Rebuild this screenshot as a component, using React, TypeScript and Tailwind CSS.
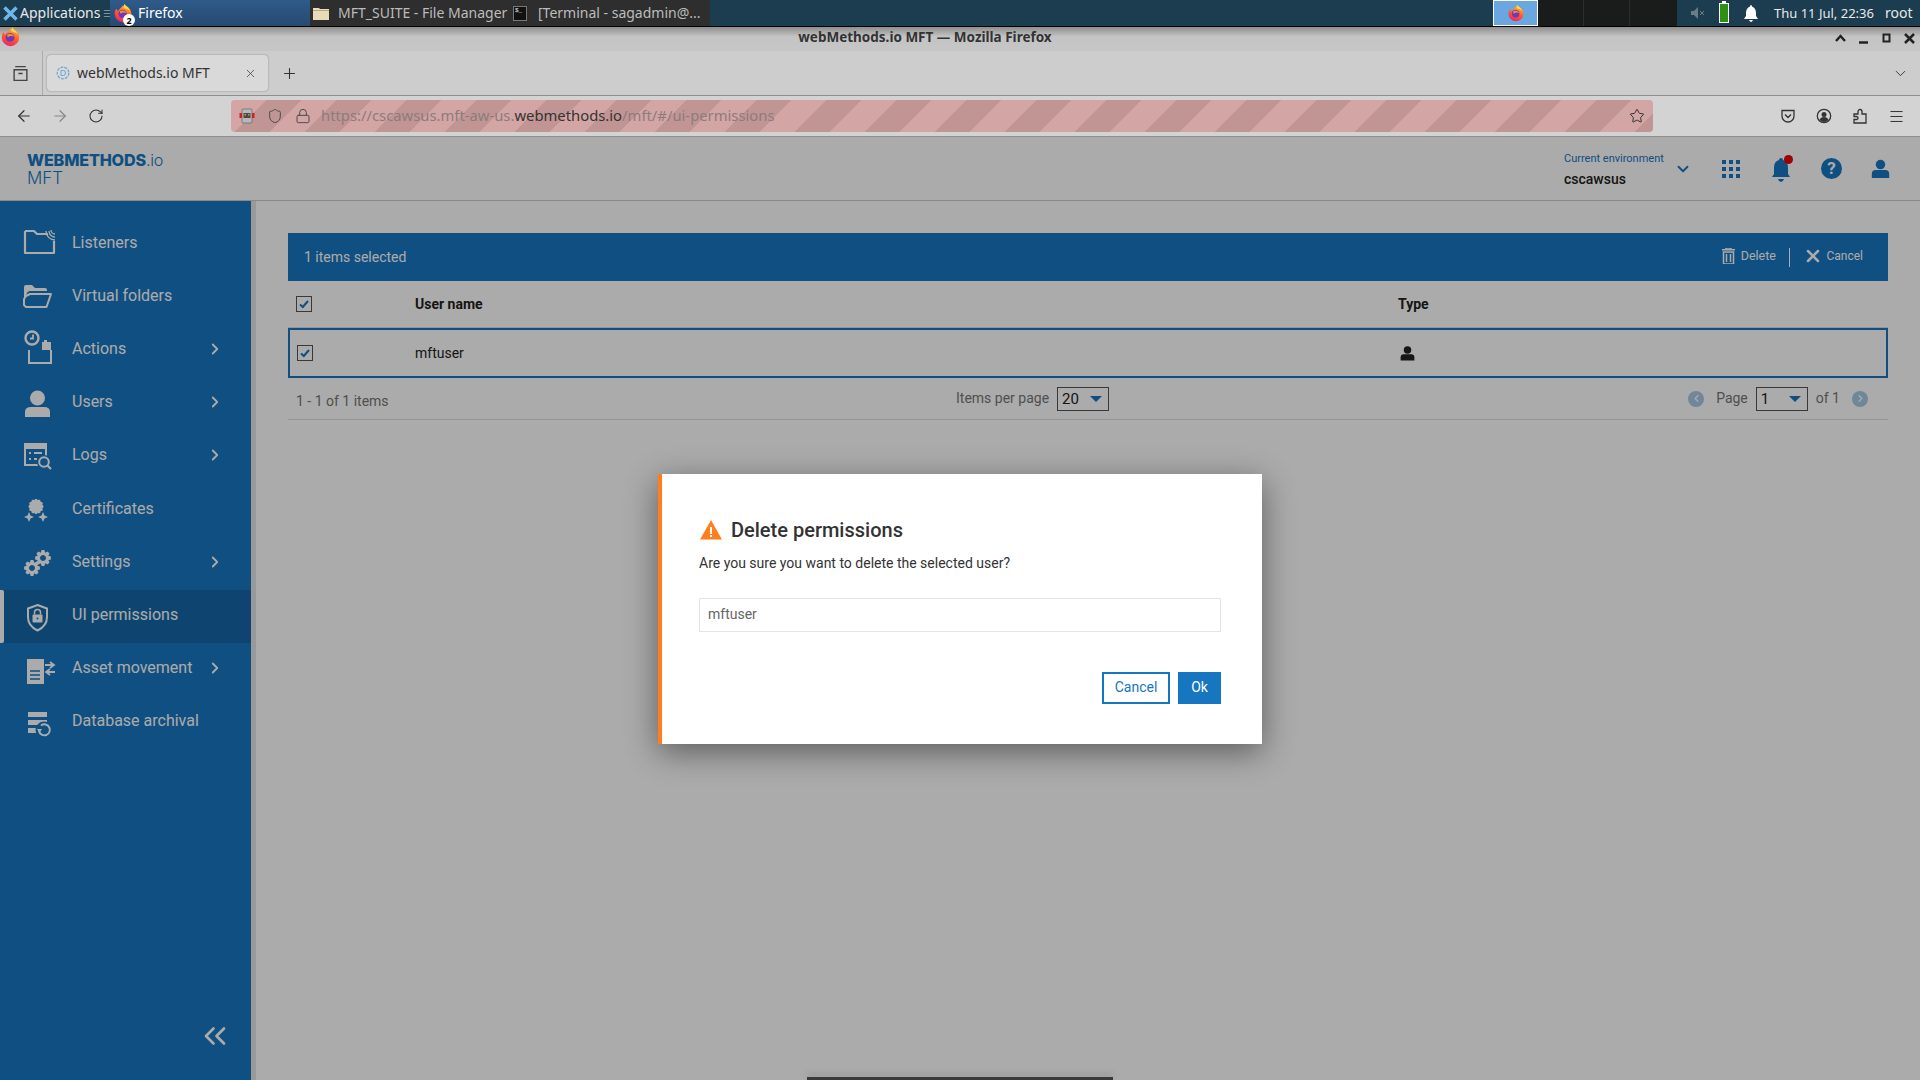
import { ChevronDown, ChevronLeft, ChevronRight, ChevronsLeft, Plus, X, ArrowLeft, ArrowRight, RotateCw, Star, Menu, Shield, Lock } from "lucide-react";
import type { ReactNode } from "react";

const ROW_BG = "#1976c0";

// toothed circle, used for the gears and the certificate seal
const gear = (cx: number, cy: number, outer: number, inner: number, teeth: number) => {
  let d = "";
  const step = (Math.PI * 2) / teeth;
  for (let i = 0; i < teeth; i++) {
    const a = i * step;
    const pts: [number, number][] = [
      [inner, a - step * 0.5],
      [outer, a - step * 0.22],
      [outer, a + step * 0.22],
    ];
    pts.forEach(([r, t], j) => {
      const x = (cx + r * Math.cos(t)).toFixed(2);
      const y = (cy + r * Math.sin(t)).toFixed(2);
      d += `${i === 0 && j === 0 ? "M" : "L"}${x} ${y}`;
    });
  }
  return d + "Z";
};

const NavSvg = ({ children }: { children: ReactNode }) => (
  <svg width="40" height="53" viewBox="0 0 40 53" fill="none" className="shrink-0">
    {children}
  </svg>
);

const navIcons: Record<string, ReactNode> = {
  listeners: (
    <NavSvg>
      <path d="M5 13H14L17 16H28M34 23V35H5V13" stroke="white" strokeWidth="2.2" strokeLinejoin="round" />
      <path d="M29 13a6 6 0 0 0 6 6M31 12a4 4 0 0 0 4 4M26 13a9 9 0 0 0 9 9" stroke="white" strokeWidth="1.3" />
    </NavSvg>
  ),
  folders: (
    <NavSvg>
      <path d="M4 16q0-2 2-2h6l3 3h10q2 0 2 2v1H10q-2 0-3 2l-3 9z" fill="white" />
      <path d="M10 23H31L26.500 36H6L4 34V28L6 25z" fill="none" stroke="white" strokeWidth="2" strokeLinejoin="round" />
    </NavSvg>
  ),
  actions: (
    <NavSvg>
      <circle cx="12" cy="14" r="6.500" stroke="white" strokeWidth="2.400" />
      <path d="M13 10.500V14.500H10" stroke="white" strokeWidth="1.800" />
      <path d="M9 26V39H31V26" stroke="white" strokeWidth="2" />
      <path d="M22 18h2v-2h3v2h4v8H22z" fill="white" />
    </NavSvg>
  ),
  users: (
    <NavSvg>
      <circle cx="17.500" cy="21" r="7.500" fill="white" />
      <path d="M5 40v-5q0-5 6-5h13q6 0 6 5v5z" fill="white" />
    </NavSvg>
  ),
  logs: (
    <NavSvg>
      <rect x="4" y="13" width="23" height="23" fill="white" />
      <rect x="6" y="19" width="19" height="15" fill={ROW_BG} />
      <path d="M9 22h2v2H9zM14 22h8v2h-8zM9 28h2v2H9zM14 28h3v2h-3z" fill="white" />
      <circle cx="24" cy="32" r="7" fill={ROW_BG} />
      <circle cx="24" cy="32" r="4.800" stroke="white" strokeWidth="2" />
      <path d="M27.500 35.500L31 39" stroke="white" strokeWidth="2.200" />
    </NavSvg>
  ),
  certificates: (
    <NavSvg>
      <path d={gear(16, 22.500, 7.500, 6.500, 12)} fill="white" />
      <path d="M9 28L10.500 31.500L14 33L10.500 34.500L9 38L7.500 34.500L4 33L7.500 31.500Z" fill="white" />
      <path d="M23 28L24.500 31.500L28 33L24.500 34.500L23 38L21.500 34.500L18 33L21.500 31.500Z" fill="white" />
    </NavSvg>
  ),
  settings: (
    <NavSvg>
      <path fillRule="evenodd" d={gear(12, 31, 8, 5.800, 8) + "M12 28a3 3 0 1 0 .01 0z"} fill="white" />
      <path fillRule="evenodd" d={gear(23, 21, 8, 5.800, 8) + "M23 18a3 3 0 1 0 .01 0z"} fill="white" />
    </NavSvg>
  ),
  permissions: (
    <NavSvg>
      <path d="M17.500 15L27 18.500V27Q27 36 17.500 40.500Q8 36 8 27V18.500Z" stroke="white" strokeWidth="2" />
      <rect x="12.500" y="24.500" width="10" height="8" rx="1" fill="white" />
      <path d="M14.500 24.500v-2a3 3 0 0 1 6 0v2" stroke="white" strokeWidth="1.500" />
      <circle cx="17.500" cy="28.500" r="1" fill={ROW_BG} />
    </NavSvg>
  ),
  assets: (
    <NavSvg>
      <path d="M7 16H24V41H7z" fill="white" />
      <path d="M10 28H20M10 32H20M10 36H20" stroke={ROW_BG} strokeWidth="1.500" />
      <path d="M25 22H33M30 19L34 22L30 25M35 29H27M30 26L26 29L30 32" stroke="white" strokeWidth="1.800" />
    </NavSvg>
  ),
  database: (
    <NavSvg>
      <path d="M8 16H27V21H8zM8 24H27V29H8zM8 32H27V37H8z" fill="white" />
      <circle cx="24" cy="34" r="8.500" fill={ROW_BG} />
      <path d="M19 35a5.500 5.500 0 1 0 2-5.500" stroke="white" strokeWidth="2" />
      <path d="M17 33L19.500 37L22 33z" fill="white" />
    </NavSvg>
  ),
};

const navItems = [
  { label: "Listeners", icon: "listeners", arrow: false },
  { label: "Virtual folders", icon: "folders", arrow: false },
  { label: "Actions", icon: "actions", arrow: true },
  { label: "Users", icon: "users", arrow: true },
  { label: "Logs", icon: "logs", arrow: true },
  { label: "Certificates", icon: "certificates", arrow: false },
  { label: "Settings", icon: "settings", arrow: true },
  { label: "UI permissions", icon: "permissions", arrow: false, active: true },
  { label: "Asset movement", icon: "assets", arrow: true },
  { label: "Database archival", icon: "database", arrow: false },
];

const FirefoxIcon = ({ size, id }: { size: number; id: string }) => (
  <svg width={size} height={size} viewBox="0 0 24 24" className="shrink-0">
    <defs>
      <linearGradient id={id} x1="0.7" y1="0" x2="0.3" y2="1">
        <stop offset="0" stopColor="#ffb52e" />
        <stop offset="0.5" stopColor="#ff5a2b" />
        <stop offset="1" stopColor="#e8246f" />
      </linearGradient>
    </defs>
    <path d="M12 3C17 3 22 7 22 13A10 10 0 0 1 2 13C2 10 3 8 4 7L6 10C7 7 10 6 12 3Z" fill={`url(#${id})`} />
    <path d="M14 1C15 4 19 5 20 9C18 7 15 7 13 6C13 4 13 3 14 1Z" fill="#ffd84a" />
    <circle cx="11.500" cy="13" r="5" fill="#6a3ab8" />
    <path d="M8 10C11 8 15 9 16 12C14 11 11 11 9 13Z" fill="#ff8a2a" />
  </svg>
);

const Checkbox = () => (
  <div className="flex h-4 w-4 items-center justify-center border border-[#555] bg-white">
    <svg width="12" height="12" viewBox="0 0 12 12" fill="none">
      <path d="M2 6.500L4.800 9L10 3" stroke={ROW_BG} strokeWidth="2" />
    </svg>
  </div>
);

const PersonGlyph = ({ className }: { className: string }) => (
  <svg viewBox="0 0 24 24" className={className} fill="currentColor">
    <circle cx="12" cy="7" r="6" />
    <path d="M1 24v-5q0-5 5-5h12q5 0 5 5v5z" />
  </svg>
);

const FakeSelect = ({ value }: { value: string }) => (
  <div className="flex h-[24px] w-[52px] items-center justify-between border border-[#555] bg-white pl-[4px] pr-[6px] text-[15px] leading-none text-[#222]">
    <span className="pt-[2px]">{value}</span>
    <span className="h-0 w-0 border-x-[6px] border-t-[6px] border-x-transparent border-t-[#1976c0]" />
  </div>
);

const PageDot = ({ next }: { next?: boolean }) => (
  <div className="flex h-4 w-4 items-center justify-center rounded-full bg-[#a8c8e4] text-white">
    {next ? <ChevronRight size={11} strokeWidth={3} /> : <ChevronLeft size={11} strokeWidth={3} />}
  </div>
);

const TaskBar = () => (
  <div className="flex h-[27px] shrink-0 border-b border-black bg-[#1c3c50] font-['Noto_Sans'] text-[14px] leading-none text-[#e8e8e8]">
    <div className="flex w-[110px] items-center pl-[3px]">
      <svg width="15" height="15" viewBox="0 0 15 15" className="mr-[2px] shrink-0">
        <path d="M1.500 1.500L13.500 13.500M13.500 1.500L1.500 13.500" stroke="#6db7ea" strokeWidth="3.500" />
      </svg>
      <span>Applications</span>
      <span className="ml-[3px] text-[9px] text-[#8ea4b0]">☰</span>
    </div>
    <div className="relative flex w-[200px] items-center bg-gradient-to-b from-[#2f5a8a] to-[#274a70] pl-[3px] text-white">
      <FirefoxIcon size={20} id="ff-task" />
      <span className="absolute left-[13px] top-[14px] flex h-[12px] w-[12px] items-center justify-center rounded-full bg-white text-[9px] font-bold text-black">2</span>
      <span className="ml-[5px]">Firefox</span>
    </div>
    <div className="flex w-[202px] items-center bg-[#2e2e2e] pl-[3px] text-[#bcbcbc]">
      <svg width="16" height="14" viewBox="0 0 16 14" className="shrink-0">
        <path d="M0 2h6l1 1h9v11H0z" fill="#e8dcb8" />
        <path d="M0 4h16v1H0z" fill="#b8a880" />
      </svg>
      <span className="ml-[9px] whitespace-nowrap">MFT_SUITE - File Manager</span>
    </div>
    <div className="flex w-[198px] items-center bg-[#2e2e2e] pl-[1px] text-[#bcbcbc]">
      <div className="flex h-[15px] w-[14px] shrink-0 items-start border border-[#777] bg-[#111] pl-[1px] font-mono text-[6px] leading-[8px] text-white">$_</div>
      <span className="ml-[11px] whitespace-nowrap">[Terminal - sagadmin@...</span>
    </div>
    <div className="flex-1" />
    <div className="flex w-[45px] items-center justify-center border border-white bg-[#6aa6e0]">
      <FirefoxIcon size={18} id="ff-pager" />
    </div>
    <div className="w-[46px] border-r border-[#2c2e2e] bg-[#1a1c1c]" />
    <div className="w-[46px] border-r border-[#2c2e2e] bg-[#1a1c1c]" />
    <div className="w-[47px] bg-[#1a1c1c]" />
    <div className="flex w-[243px] items-center overflow-hidden whitespace-nowrap pl-[14px] text-[13px]">
      <svg width="14" height="12" viewBox="0 0 14 12" className="shrink-0">
        <path d="M0 4h3l4-4v12L3 8H0z" fill="#6a7c88" />
        <path d="M9 4l4 4M13 4l-4 4" stroke="#6a7c88" strokeWidth="1" />
      </svg>
      <div className="relative ml-[14px] h-[20px] w-[10px] shrink-0 border border-white bg-[#2f8f10]">
        <div className="absolute -top-[3px] left-[2px] h-[2px] w-[4px] bg-white" />
      </div>
      <svg width="14" height="17" viewBox="0 0 14 17" className="ml-[15px] shrink-0">
        <path d="M7 0q1 0 1 1.500Q12 3 12 8v3l2 3H0l2-3V8q0-5 4-6.500Q6 0 7 0zM5 15h4q-1 2-2 2t-2-2z" fill="white" />
      </svg>
      <span className="ml-[16px]">Thu 11 Jul, 22:36</span>
      <span className="ml-[11px] text-[14px]">root</span>
    </div>
  </div>
);

const TitleBar = () => (
  <div className="relative flex h-[24px] shrink-0 items-center justify-center bg-gradient-to-b from-[#8e8e8e] via-[#c4c4c4] via-40% to-[#c6c6c6] pb-[2px] pr-[70px] font-['Noto_Sans'] text-[13.500px] font-bold leading-none text-[#333]">
    <div className="absolute left-0 top-[-1px]">
      <FirefoxIcon size={21} id="ff-title" />
    </div>
    <span>webMethods.io MFT — Mozilla Firefox</span>
    <div className="absolute right-[5px] top-[6px] flex items-center gap-[12px] text-[#222]">
      <svg width="11" height="11" viewBox="0 0 11 11"><path d="M1 8L5.500 3L10 8" fill="none" stroke="currentColor" strokeWidth="2.500" /></svg>
      <svg width="11" height="11" viewBox="0 0 11 11"><path d="M1 9.500H10" stroke="currentColor" strokeWidth="2.500" /></svg>
      <svg width="11" height="11" viewBox="0 0 11 11"><rect x="2.500" y="1.500" width="6" height="7" fill="none" stroke="currentColor" strokeWidth="2" /></svg>
      <svg width="11" height="11" viewBox="0 0 11 11"><path d="M1 1L10 10M10 1L1 10" stroke="currentColor" strokeWidth="2.500" /></svg>
    </div>
  </div>
);

const TabStrip = () => (
  <div className="flex h-[45px] shrink-0 items-center border-b border-[#8f8f8f] bg-[#cdcdcd] font-['Noto_Sans'] text-[#333]">
    <div className="flex h-full w-[43px] items-center justify-center border-r border-[#aaa] pr-[2px]">
      <svg width="17" height="17" viewBox="0 0 16 16" fill="none" stroke="#444" strokeWidth="1.300">
        <path d="M3 1.500H13M2 4.500H14V14.500H2zM6 8H10" />
      </svg>
    </div>
    <div className="ml-[4px] flex h-[36px] w-[221px] items-center rounded-[4px] bg-[#d9d9d9] pl-[9px] pr-[11px] text-[14px] shadow-[0_0_2px_rgba(0,0,0,0.35)]">
      <svg width="14" height="14" viewBox="0 0 14 14" fill="none" className="shrink-0">
        <circle cx="7" cy="7" r="5.800" stroke="#6ba7d8" strokeWidth="1.200" strokeDasharray="3 1" />
        <path d="M5 4.500H7.500Q9.500 4.500 9.500 7T7.500 9.500H5z" stroke="#6ba7d8" strokeWidth="1" />
      </svg>
      <span className="ml-[7px] flex-1 whitespace-nowrap pb-[1px]">webMethods.io MFT</span>
      <X size={13} strokeWidth={1.300} />
    </div>
    <Plus size={17} strokeWidth={1.500} className="ml-[13px]" />
    <ChevronDown size={17} strokeWidth={1.300} className="ml-auto mr-[11px]" />
  </div>
);

const UrlBar = () => (
  <div className="flex h-[41px] shrink-0 items-center border-b border-[#8f8f8f] bg-[#d3d3d3] font-['Noto_Sans'] text-[#333]">
    <ArrowLeft size={18} strokeWidth={1.600} className="ml-[15px]" />
    <ArrowRight size={18} strokeWidth={1.600} className="ml-[18px] text-[#888]" />
    <RotateCw size={16} strokeWidth={1.600} className="ml-[19px]" />
    <div className="ml-[127px] flex h-[32px] w-[1422px] items-center rounded-[4px] bg-[repeating-linear-gradient(135deg,#d4a5a5_0,#d4a5a5_24.75px,#c29595_24.75px,#c29595_49.5px)] pr-[8px]">
      <svg width="16" height="16" viewBox="0 0 16 16" className="ml-[8px] shrink-0">
        <rect x="3" y="1" width="10" height="14" rx="1" fill="#b8b8b8" stroke="#555" strokeWidth="0.600" />
        <rect x="4.500" y="5" width="7" height="5" fill="#4a4a4a" />
        <rect x="5.500" y="6" width="1.500" height="1.500" fill="#e89030" />
        <rect x="9" y="6" width="1.500" height="1.500" fill="#e89030" />
        <rect x="0.500" y="5" width="2.500" height="5" fill="#d02020" />
        <rect x="13" y="5" width="2.500" height="5" fill="#d02020" />
      </svg>
      <Shield size={16} strokeWidth={1.400} className="ml-[12px] shrink-0 text-[#444]" />
      <Lock size={16} strokeWidth={1.400} className="ml-[12px] shrink-0 text-[#444]" />
      <span className="ml-[10px] whitespace-nowrap pb-[2px] text-[14.800px] text-[#8c7c7c]">
        https://cscawsus.mft-aw-us.<span className="text-[#333]">webmethods.io</span>/mft/#/ui-permissions
      </span>
      <Star size={16} strokeWidth={1.500} className="ml-auto shrink-0 text-[#333]" />
    </div>
    <div className="ml-[127px] flex items-center gap-[20px]">
      <svg width="16" height="16" viewBox="0 0 16 16" fill="none" stroke="#333" strokeWidth="1.300">
        <path d="M2 2.500H14V8A6 6 0 0 1 2 8zM5 6.500L8 9.500L11 6.500" />
      </svg>
      <svg width="16" height="16" viewBox="0 0 16 16" fill="none">
        <circle cx="8" cy="8" r="6.700" stroke="#333" strokeWidth="1.300" />
        <circle cx="8" cy="6.500" r="2.500" fill="#333" />
        <path d="M3.500 12q1-3 4.500-3t4.500 3q-2 2-4.500 2t-4.500-2z" fill="#333" />
      </svg>
      <svg width="16" height="16" viewBox="0 0 16 16" fill="none" stroke="#333" strokeWidth="1.300">
        <path d="M2 6H6V3.500a2 2 0 0 1 4 0V6H14V15H2V11.500H4.500a1.500 1.500 0 0 0 0-3H2z" />
      </svg>
      <Menu size={17} strokeWidth={1.400} />
    </div>
  </div>
);

const AppHeader = () => (
  <div className="flex h-[64px] shrink-0 items-center border-b border-[#ccc] bg-white pl-[27px] pr-[30px]">
    <div className="flex flex-col pt-[2px] text-[#1976c0]">
      <div className="font-['Inter'] text-[16.200px] font-extrabold leading-[18px] tracking-[-0.2px]">
        WEBMETHODS<span className="font-light">.io</span>
      </div>
      <div className="font-['Inter'] text-[17px] font-light leading-[19px]">MFT</div>
    </div>
    <div className="ml-auto flex w-[102px] flex-col pt-[1px]">
      <span className="text-[11px] leading-[14px] text-[#1976c0]">Current environment</span>
      <span className="mt-[5px] text-[14px] font-medium leading-[16px] text-[#222]">cscawsus</span>
    </div>
    <ChevronDown size={18} strokeWidth={2.500} className="ml-[8px] text-[#1976c0]" />
    <div className="ml-[30px] grid grid-cols-3 gap-[3px]">
      {Array.from({ length: 9 }).map((_, i) => (
        <div key={i} className="h-[4px] w-[4px] bg-[#1976c0]" />
      ))}
    </div>
    <div className="relative ml-[32px] h-[26px] w-[18px]">
      <svg width="18" height="26" viewBox="0 0 18 26" className="text-[#1976c0]">
        <path d="M9 2q2 0 2 2q5 1 5 8v6l2 3H0l2-3v-6q0-7 5-8q0-2 2-2zM6 23h6q-1 3-3 3t-3-3z" fill="currentColor" />
      </svg>
      <div className="absolute -right-[3px] -top-[1px] h-[9px] w-[9px] rounded-full bg-[#ee0000]" />
    </div>
    <div className="ml-[31px] flex h-[21px] w-[21px] items-center justify-center rounded-full bg-[#1976c0] text-[17px] font-bold leading-none text-white">?</div>
    <PersonGlyph className="ml-[29px] h-[21px] w-[19px] text-[#1976c0]" />
  </div>
);

const Sidebar = () => (
  <div className="flex w-[256px] shrink-0 border-r-[5px] border-[#e4e4e4]">
    <div className="relative flex w-[251px] flex-col bg-[#1976c0] pt-[17px] text-[16px] text-white">
      {navItems.map((item) => (
        <div key={item.label} className={`relative flex h-[53.100px] items-center pl-[20px] ${item.active ? "bg-[#1468a8]" : ""}`}>
          {item.active && <div className="absolute inset-y-0 left-0 w-[4px] rounded-r-[2px] bg-white" />}
          {navIcons[item.icon]}
          <span className="ml-[12px] pb-[3px] leading-none">{item.label}</span>
          {item.arrow && <ChevronRight size={18} strokeWidth={2.400} className="absolute left-[206px] top-[16px]" />}
        </div>
      ))}
      <ChevronsLeft size={36} strokeWidth={1.800} className="absolute bottom-[26px] left-[197px]" />
    </div>
  </div>
);

const Content = () => (
  <div className="min-w-0 flex-1 pl-[32px] pr-[32px] pt-[32px] text-[14px] text-[#222]">
    <div className="flex h-[48px] items-center bg-[#1976c0] pl-[16px] pr-[25px] text-white">
      <span>1 items selected</span>
      <svg width="13" height="16" viewBox="0 0 13 16" fill="none" className="ml-auto mb-[2px]">
        <path d="M0 1.800H13M4 1V0H9V1M1.500 4H11.500V16H1.500zM4.500 6V14M8.500 6V14" stroke="white" strokeWidth="1.500" />
      </svg>
      <span className="ml-[6px] mb-[2px] text-[12.500px]">Delete</span>
      <div className="ml-[13px] h-[19px] w-px bg-white" />
      <X size={20} strokeWidth={3} className="ml-[13px] mb-[2px]" />
      <span className="ml-[3.500px] mb-[2px] text-[12px]">Cancel</span>
    </div>
    <div className="flex h-[47px] items-center border-b border-[#ddd]">
      <div className="w-[127px] pl-[8px]"><Checkbox /></div>
      <div className="w-[983px] font-bold">User name</div>
      <div className="font-bold">Type</div>
    </div>
    <div className="flex h-[50px] items-center border-2 border-[#1976c0]">
      <div className="w-[125px] pl-[7px]"><Checkbox /></div>
      <div className="w-[985px]">mftuser</div>
      <PersonGlyph className="h-[16px] w-[15px] text-[#222]" />
    </div>
    <div className="flex h-[42px] items-center border-b border-[#ddd] text-[#777]">
      <div className="w-[668px] pl-[8px] pt-[6px]">1 - 1 of 1 items</div>
      <span className="pb-[1px]">Items per page</span>
      <div className="ml-[8px]"><FakeSelect value="20" /></div>
      <div className="ml-auto flex items-center pr-[20px]">
        <PageDot />
        <span className="ml-[12px]">Page</span>
        <div className="ml-[8px]"><FakeSelect value="1" /></div>
        <span className="ml-[8px]">of 1</span>
        <div className="ml-[12px]"><PageDot next /></div>
      </div>
    </div>
  </div>
);

const DeleteDialog = () => (
  <div className="absolute inset-0 flex items-center justify-center bg-black/33">
    <div className="flex h-[270px] w-[604px] flex-col border-l-4 border-[#ff7f1e] bg-white pl-[37px] pr-[41px] pt-[45px] text-[#333] shadow-[0_8px_30px_rgba(0,0,0,0.45)]">
      <div className="flex h-[22px] items-center">
        <svg width="22" height="20" viewBox="0 0 22 20" className="ml-[1px] shrink-0">
          <path d="M11 0L22 19.500H0z" fill="#ff7f1e" />
          <path d="M10 7h2v7h-2zM10 15h2v2h-2z" fill="white" />
        </svg>
        <span className="ml-[9px] text-[20px] font-medium leading-none">Delete permissions</span>
      </div>
      <p className="mt-[13px] text-[14px] leading-[18px]">Are you sure you want to delete the selected user?</p>
      <input
        readOnly
        value="mftuser"
        className="mt-[26px] h-[34px] w-full shrink-0 border border-[#e4e4e4] px-[8px] pb-[2px] text-[14px] text-[#666] outline-none"
      />
      <div className="mt-[40px] flex justify-end gap-[8px] text-[14px]">
        <button className="h-[32px] w-[68px] border-2 border-[#1776c0] text-[#1776c0]">Cancel</button>
        <button className="h-[32px] w-[43px] bg-[#1776c0] text-white">Ok</button>
      </div>
    </div>
  </div>
);

export default function App() {
  return (
    <div className="flex h-screen w-screen flex-col overflow-hidden bg-white font-['Roboto',sans-serif]">
      <TaskBar />
      <TitleBar />
      <TabStrip />
      <UrlBar />
      <div className="relative flex min-h-0 flex-1 flex-col">
        <AppHeader />
        <div className="flex min-h-0 flex-1">
          <Sidebar />
          <Content />
        </div>
        <DeleteDialog />
        <div className="absolute bottom-0 left-[807px] h-[3px] w-[306px] bg-[#3a3a3a] shadow-[0_-3px_6px_rgba(0,0,0,0.15)]" />
      </div>
    </div>
  );
}
